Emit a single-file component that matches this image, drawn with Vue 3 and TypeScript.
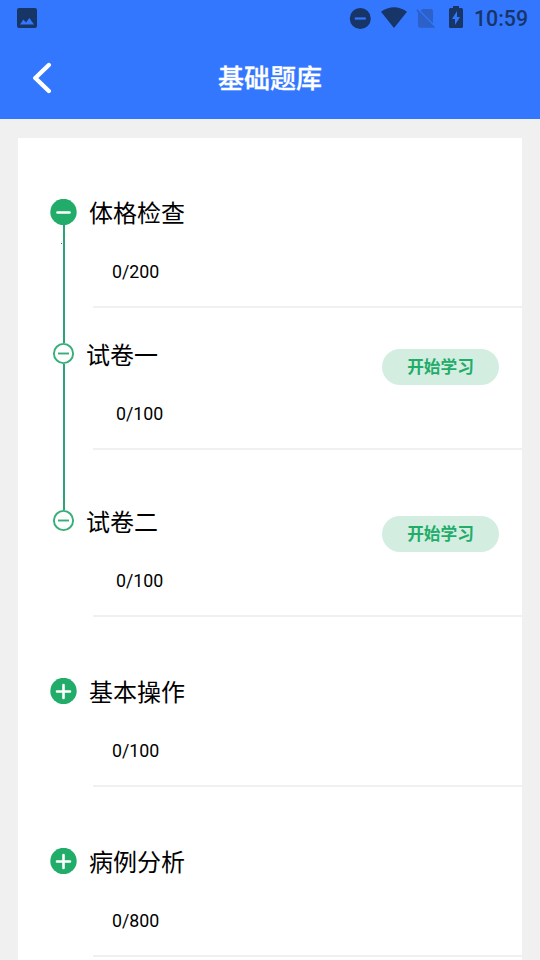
<script setup lang="ts">
interface Section {
  title: string
  count: string
  kind: 'open' | 'closed' | 'child'
  gap: 'short' | 'medium' | 'tall'
  line?: 'down' | 'through' | 'up'
}

const sections: Section[] = [
  { title: '体格检查', count: '0/200', kind: 'open', gap: 'tall', line: 'down' },
  { title: '试卷一', count: '0/100', kind: 'child', gap: 'short', line: 'through' },
  { title: '试卷二', count: '0/100', kind: 'child', gap: 'medium', line: 'up' },
  { title: '基本操作', count: '0/100', kind: 'closed', gap: 'tall' },
  { title: '病例分析', count: '0/800', kind: 'closed', gap: 'tall' },
]
</script>

<template>
  <div class="screen">
    <header>
      <div class="status">
        <svg class="photo" width="20" height="20" viewBox="0 0 20 20">
          <path fill-rule="evenodd" d="M2 0H18Q20 0 20 2V18Q20 20 18 20H2Q0 20 0 18V2Q0 0 2 0ZM3 16.5H17L12.4 10L9 14.5L6.4 11.6Z" />
        </svg>
        <div class="indicators">
          <svg width="22" height="22" viewBox="0 0 22 22">
            <circle cx="11.3" cy="10.5" r="10.5" />
            <path class="cut" d="M5.8 10.5H16.8" />
          </svg>
          <svg class="wifi" width="26" height="21" viewBox="0 0 26 21">
            <path d="M0 4.7C8-1.4 18-1.4 26 4.7L13 21Z" />
          </svg>
          <svg class="sim" width="20" height="21" viewBox="0 0 20 21">
            <path d="M6.5 1H15Q17 1 17 3V15.4L4.7 2.8ZM2 3L17 18.4Q16.5 19.8 15 19.8H4Q2 19.8 2 18Z" />
            <path class="slash" d="M0.8 1.8L18.4 19.8" />
          </svg>
          <svg class="battery" width="14" height="22" viewBox="0 0 14 22">
            <path fill-rule="evenodd" d="M4 0H10V2H12.5Q14 2 14 3.5V20.5Q14 22 12.5 22H1.5Q0 22 0 20.5V3.5Q0 2 1.5 2H4ZM8 5L3 13H6V19L11 11H8Z" />
          </svg>
          <span class="time">10:59</span>
        </div>
      </div>
      <div class="navbar">
        <button class="back" aria-label="返回">
          <svg width="20" height="32" viewBox="0 0 20 32">
            <path d="M16.8 3L3.3 16L16.8 29" />
          </svg>
        </button>
        <h1>基础题库</h1>
      </div>
    </header>

    <main>
      <section v-for="item in sections" :key="item.title" class="row" :class="[item.kind, item.gap]">
        <div class="rail">
          <i class="line before" :class="{ on: item.line === 'through' || item.line === 'up' }"></i>
          <svg v-if="item.kind === 'child'" class="node" width="23" height="23" viewBox="0 0 23 23">
            <circle class="ring" cx="11.5" cy="11.5" r="9.6" />
            <path class="ring" d="M6 11.5H17" />
          </svg>
          <svg v-else class="node" width="27" height="26" viewBox="0 0 27 26">
            <circle class="disc" cx="13.5" cy="13" r="13.2" />
            <path class="mark" :d="item.kind === 'open' ? 'M7.5 13.5H19.5' : 'M7 13.5H20M13.5 7V20'" />
          </svg>
          <i class="line after" :class="{ on: item.line === 'through' || item.line === 'down' }">
            <i v-if="item.kind === 'open'" class="speck"></i>
          </i>
        </div>
        <div class="body">
          <div class="text">
            <h2>{{ item.title }}</h2>
            <p>{{ item.count }}</p>
          </div>
          <button v-if="item.kind === 'child'" class="start">开始学习</button>
        </div>
      </section>
    </main>
  </div>
</template>

<style>
body {
  margin: 0;
}
</style>

<style scoped>
.screen {
  height: 960px;
  overflow: hidden;
  background: #f0f0f0;
  font-family: Roboto, "Noto Sans CJK SC", sans-serif;
  color: #000;
}
svg {
  display: block;
  flex: none;
}
button {
  border: 0;
  padding: 0;
  font-family: inherit;
}
h1,
h2,
p {
  margin: 0;
}
header {
  height: 119px;
  background: #3377ff;
}
.status {
  height: 37px;
  display: flex;
  justify-content: space-between;
  align-items: center;
  padding: 0 12px 0 17px;
  fill: #173567;
}
.photo {
  margin-bottom: 1px;
}
.indicators {
  display: flex;
  align-items: center;
}
.cut {
  stroke: #3377ff;
  stroke-width: 2.2;
}
.wifi {
  margin: 0 0 2px 10px;
}
.sim {
  margin: 0 0 1px 9px;
  fill: #2b61c9;
}
.slash {
  stroke: #2b61c9;
  stroke-width: 1.8;
}
.battery {
  margin: 0 0 3px 13px;
}
.time {
  margin-left: 11px;
  font-size: 21.3px;
  font-weight: 500;
  line-height: 36px;
  color: #173567;
}
.navbar {
  height: 82px;
  display: grid;
  grid-template-columns: 90px 1fr 90px;
  align-items: center;
}
.back {
  width: 20px;
  margin: 0 0 0 32px;
  background: none;
}
.back path {
  fill: none;
  stroke: #fff;
  stroke-width: 4.4;
  stroke-linecap: round;
  stroke-linejoin: round;
}
h1 {
  padding-top: 2px;
  font-size: 26px;
  font-weight: 500;
  line-height: 40px;
  text-align: center;
  color: #fff;
  -webkit-text-stroke: 0.3px #fff;
}
main {
  min-height: 822px;
  margin: 19px 18px 0;
  background: #fff;
}
.row {
  display: flex;
}
.tall {
  height: 170px;
  --lead: 61px;
}
.medium {
  height: 167px;
  --lead: 58px;
}
.short {
  height: 142px;
  --lead: 33px;
}
.child {
  --lead-adjust: 2px;
}
.rail {
  width: 75px;
  padding-left: 32px;
  box-sizing: border-box;
  display: flex;
  flex-direction: column;
  align-items: flex-start;
}
.line {
  width: 2px;
  margin-left: 13px;
}
.before {
  height: calc(var(--lead) + var(--lead-adjust, 0px));
}
.after {
  position: relative;
  flex: 1;
}
.on {
  background: #2da477;
}
.speck {
  position: absolute;
  left: -2px;
  top: 18px;
  width: 1px;
  height: 1px;
  background: #4b5a53;
}
.child .node {
  margin: -1px 0 -1px 2px;
}
.disc {
  fill: #22ac69;
}
.mark {
  fill: none;
  stroke: #fff;
  stroke-width: 2.6;
  stroke-linecap: round;
}
.ring {
  fill: none;
  stroke: #35ae78;
  stroke-width: 1.9;
}
.body {
  flex: 1;
  display: flex;
  justify-content: space-between;
  align-items: flex-start;
  padding: calc(var(--lead) - 7px) 23px 0 0;
  border-bottom: 2px solid #f0f0f0;
}
h2 {
  margin: 2px 0 0 -4px;
  font-size: 24px;
  font-weight: 400;
  line-height: 40px;
}
p {
  margin: 23px 0 0 19px;
  font-size: 17.8px;
  line-height: 30px;
}
.child h2 {
  margin-left: -7px;
}
.child p {
  margin-left: 23px;
}
.start {
  width: 117px;
  height: 36px;
  margin-top: 15px;
  padding-top: 2px;
  border-radius: 18px;
  background: #d3eee1;
  color: #22ac69;
  font-size: 16.7px;
  font-weight: 700;
  line-height: 34px;
}
</style>
